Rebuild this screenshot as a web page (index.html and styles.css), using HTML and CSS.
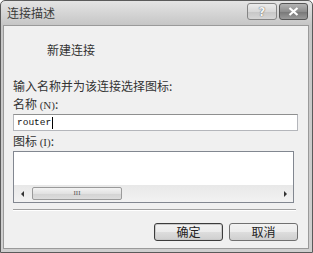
FILE: index.html
```html
<!DOCTYPE html>
<html>
<head>
    <meta charset="utf-8" />
    <title>连接描述</title>
    <link rel="stylesheet" href="styles.css">
</head>
<body>
    <div class="window">
        <div class="titlebar">
            <span class="title">连接描述</span>
            <div class="caption-buttons">
                <span class="cap-btn help">?</span>
                <span class="cap-btn close">
                    <svg width="11" height="9" viewBox="0 0 11 9">
                        <path d="M1.5 1 L9.5 8 M9.5 1 L1.5 8" stroke="#fff" stroke-width="2.2" fill="none" />
                    </svg>
                </span>
            </div>
        </div>
        <div class="client">
            <div class="conn-name">新建连接</div>
            <div class="prompt">输入名称并为该连接选择图标:</div>
            <div class="label">名称 <span class="key">(N)</span>:</div>
            <div class="textbox">router<span class="caret"></span></div>
            <div class="label icon-label">图标 <span class="key">(I)</span>:</div>
            <div class="listbox">
                <div class="list-area"></div>
                <div class="hscroll">
                    <span class="arrow left"></span>
                    <span class="thumb"><span class="grip">III</span></span>
                    <span class="arrow right"></span>
                </div>
            </div>
            <div class="separator"></div>
            <div class="buttons">
                <button class="btn default">确定</button>
                <button class="btn">取消</button>
            </div>
        </div>
    </div>
</body>
</html>
```
FILE: styles.css
```css
* {
    box-sizing: border-box;
}

html, body {
    margin: 0;
    padding: 0;
}

body {
    width: 313px;
    height: 253px;
    overflow: hidden;
    background: #fff;
    font-family: "Noto Sans CJK SC", "Noto Sans", sans-serif;
    font-size: 12px;
    color: #333;
}

.window {
    width: 313px;
    height: 253px;
    border: 1px solid #5a5a5a;
    border-radius: 5px 5px 0 0;
    background: linear-gradient(#e4e4e4, #c6c6c6 24px, #cfcfcf);
    display: flex;
    flex-direction: column;
}

.titlebar {
    height: 23px;
    display: flex;
    align-items: center;
    justify-content: space-between;
    padding: 0 4px 0 6px;
}

.title {
    font-size: 12px;
    color: #3a3a3a;
    line-height: 1;
    margin-top: 1px;
}

.caption-buttons {
    display: flex;
    gap: 2px;
    margin-top: -2px;
}

.cap-btn {
    height: 17px;
    border: 1px solid #858585;
    border-radius: 3px;
    display: flex;
    align-items: center;
    justify-content: center;
}

.help {
    width: 30px;
    background: linear-gradient(#ececec, #d8d8d8 50%, #c6c6c6 51%, #d6d6d6);
    color: #f4f4f4;
    font-family: "DejaVu Sans", sans-serif;
    font-size: 12px;
    font-weight: bold;
    text-shadow: 0 0 1px #666, 0 0 1px #666;
}

.close {
    width: 29px;
    border-color: #555;
    background: linear-gradient(#b4b4b4, #8e8e8e 50%, #767676 51%, #9a9a9a);
}

.client {
    flex: 1;
    margin: 1px 3px 3px 2px;
    background: #f0f0f0;
    border: 1px solid #9a9a9a;
    padding: 0 0 0 9px;
    display: flex;
    flex-direction: column;
}

.conn-name {
    margin: 16px 0 0 34px;
    line-height: 16px;
}

.prompt {
    margin-top: 20px;
    line-height: 16px;
}

.label {
    margin-top: 2px;
    line-height: 16px;
}

.key {
    font-family: "Liberation Serif", serif;
    font-size: 11px;
}

.textbox {
    margin-top: 1px;
    width: 285px;
    height: 17px;
    background: #fff;
    border: 1px solid #b4b6bb;
    border-top-color: #8e8f8f;
    font-family: "Liberation Mono", monospace;
    font-size: 9.5px;
    color: #111;
    line-height: 15px;
    padding-left: 3px;
    display: flex;
    align-items: center;
}

.caret {
    display: inline-block;
    width: 1px;
    height: 12px;
    background: #000;
    margin-left: 1px;
}

.icon-label {
    margin-top: 2px;
}

.listbox {
    margin-top: 1px;
    width: 281px;
    height: 52px;
    border: 1px solid #828790;
    background: #fff;
    display: flex;
    flex-direction: column;
}

.list-area {
    flex: 1;
}

.hscroll {
    height: 17px;
    background: linear-gradient(#e8e8e8, #f2f2f2);
    display: flex;
    align-items: center;
    padding: 0 6px 0 7px;
}

.arrow {
    width: 0;
    height: 0;
    border-top: 3px solid transparent;
    border-bottom: 3px solid transparent;
}

.arrow.left {
    border-right: 3px solid #333;
}

.arrow.right {
    border-left: 3px solid #333;
    margin-left: auto;
}

.thumb {
    margin-left: 8px;
    width: 90px;
    height: 13px;
    border: 1px solid #9a9a9a;
    border-radius: 2px;
    background: linear-gradient(#f3f3f3, #e2e2e2 50%, #d3d3d3 51%, #dcdcdc);
    display: flex;
    align-items: center;
    justify-content: center;
}

.grip {
    font-family: "Liberation Serif", serif;
    font-size: 7px;
    color: #555;
    line-height: 1;
}

.separator {
    margin-top: 6px;
    width: 283px;
    border-top: 1px solid #a0a0a0;
    border-bottom: 1px solid #fff;
}

.buttons {
    margin-top: 12px;
    display: flex;
    gap: 6px;
    padding-left: 141px;
}

.btn {
    width: 69px;
    height: 18px;
    padding: 0;
    border: 1px solid #707070;
    border-radius: 3px;
    background: linear-gradient(#f2f2f2, #ebebeb 50%, #dddddd 51%, #cfcfcf);
    font-family: "Noto Sans CJK SC", sans-serif;
    font-size: 12px;
    line-height: 16px;
    color: #222;
}

.btn.default {
    border-color: #3c3c3c;
    box-shadow: inset 0 0 0 1px #c9c9c9;
}
```
